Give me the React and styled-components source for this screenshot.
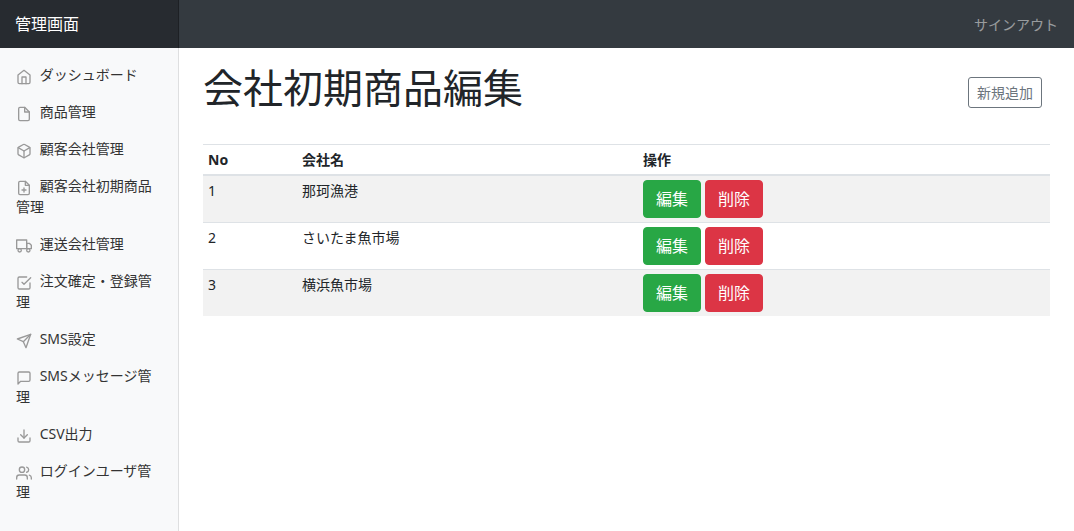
import React from 'react';
import styled, { createGlobalStyle } from 'styled-components';
import {
  FiHome,
  FiFile,
  FiBox,
  FiFilePlus,
  FiTruck,
  FiCheckSquare,
  FiSend,
  FiMessageSquare,
  FiDownload,
  FiUsers,
} from 'react-icons/fi';

const menu = [
  { icon: FiHome, label: 'ダッシュボード' },
  { icon: FiFile, label: '商品管理' },
  { icon: FiBox, label: '顧客会社管理' },
  { icon: FiFilePlus, label: '顧客会社初期商品管理' },
  { icon: FiTruck, label: '運送会社管理' },
  { icon: FiCheckSquare, label: '注文確定・登録管理' },
  { icon: FiSend, label: 'SMS設定' },
  { icon: FiMessageSquare, label: 'SMSメッセージ管理' },
  { icon: FiDownload, label: 'CSV出力' },
  { icon: FiUsers, label: 'ログインユーザ管理' },
];

const companies = [
  { id: 1, name: '那珂漁港' },
  { id: 2, name: 'さいたま魚市場' },
  { id: 3, name: '横浜魚市場' },
];

const App = () => (
  <>
    <GlobalStyle />
    <TopBar>
      <Brand>管理画面</Brand>
      <SignOut href="#">サインアウト</SignOut>
    </TopBar>
    <Layout>
      <Sidebar>
        {menu.map(({ icon: Icon, label }) => (
          <NavItem href="#" key={label}>
            <Icon /> {label}
          </NavItem>
        ))}
      </Sidebar>
      <Main>
        <Header>
          <Title>会社初期商品編集</Title>
          <AddButton>新規追加</AddButton>
        </Header>
        <Table>
          <thead>
            <tr>
              <HeadCell $width="94px">No</HeadCell>
              <HeadCell $width="341px">会社名</HeadCell>
              <HeadCell>操作</HeadCell>
            </tr>
          </thead>
          <tbody>
            {companies.map(company => (
              <Row key={company.id}>
                <Cell>{company.id}</Cell>
                <Cell>{company.name}</Cell>
                <Cell>
                  <Actions>
                    <ActionButton $color="#28a745">編集</ActionButton>
                    <ActionButton $color="#dc3545">削除</ActionButton>
                  </Actions>
                </Cell>
              </Row>
            ))}
          </tbody>
        </Table>
      </Main>
    </Layout>
  </>
);

export default App;

const GlobalStyle = createGlobalStyle`
  * {
    box-sizing: border-box;
  }
  body {
    margin: 0;
    background: #fff;
    color: #212529;
    font-family: "Noto Sans", "Noto Sans CJK JP", sans-serif;
    font-size: 16px;
    line-height: 1.5;
  }
`;

const TopBar = styled.header`
  display: flex;
  align-items: center;
  justify-content: space-between;
  height: 48px;
  background: #343a40;
`;

const Brand = styled.div`
  display: flex;
  align-items: center;
  width: 179px;
  height: 100%;
  padding: 0 15px;
  background: rgba(0, 0, 0, 0.25);
  box-shadow: inset -1px 0 0 rgba(0, 0, 0, 0.25);
  color: #fff;
  font-size: 16px;
`;

const SignOut = styled.a`
  padding: 0 16px;
  color: rgba(255, 255, 255, 0.5);
  font-size: 14px;
  text-decoration: none;
`;

const Layout = styled.div`
  display: flex;
  min-height: 483px;
`;

const Sidebar = styled.nav`
  flex: 0 0 179px;
  padding-top: 8px;
  background: #f8f9fa;
  box-shadow: inset -1px 0 0 rgba(0, 0, 0, 0.1);
`;

const NavItem = styled.a`
  display: block;
  padding: 8px 16px;
  color: #333;
  font-size: 14px;
  font-weight: 400;
  text-decoration: none;

  svg {
    width: 16px;
    height: 16px;
    margin-right: 4px;
    color: #999;
    vertical-align: -5px;
  }
`;

const Main = styled.main`
  flex: 1;
  min-width: 0;
  padding: 0 24px;
`;

const Header = styled.div`
  display: flex;
  align-items: center;
  justify-content: space-between;
  margin-bottom: 16px;
  padding: 16px 8px 8px 0;
`;

const Title = styled.h1`
  margin: 0 0 8px;
  font-size: 40px;
  font-weight: 400;
  line-height: 1.2;
`;

const AddButton = styled.button`
  padding: 4px 8px;
  border: 1px solid #6c757d;
  border-radius: 3px;
  background: transparent;
  color: #6c757d;
  font: inherit;
  font-size: 14px;
  line-height: 1.5;
`;

const Table = styled.table`
  width: 100%;
  border-collapse: collapse;
  font-size: 14px;
`;

const HeadCell = styled.th`
  width: ${p => p.$width || 'auto'};
  padding: 4px 5px;
  border-top: 1px solid #dee2e6;
  border-bottom: 2px solid #dee2e6;
  font-weight: 700;
  text-align: left;
`;

const Row = styled.tr`
  &:nth-child(odd) {
    background: #f2f2f2;
  }
`;

const Cell = styled.td`
  padding: 4px 5px;
  border-top: 1px solid #dee2e6;
  vertical-align: top;

  ${Row}:first-child & {
    border-top: 0;
  }
`;

const Actions = styled.div`
  display: flex;
  gap: 4px;
`;

const ActionButton = styled.button`
  width: 58px;
  height: 38px;
  padding: 6px 12px;
  border: 1px solid ${p => p.$color};
  border-radius: 4px;
  background: ${p => p.$color};
  color: #fff;
  font: inherit;
  font-size: 16px;
  line-height: 1.5;
`;
